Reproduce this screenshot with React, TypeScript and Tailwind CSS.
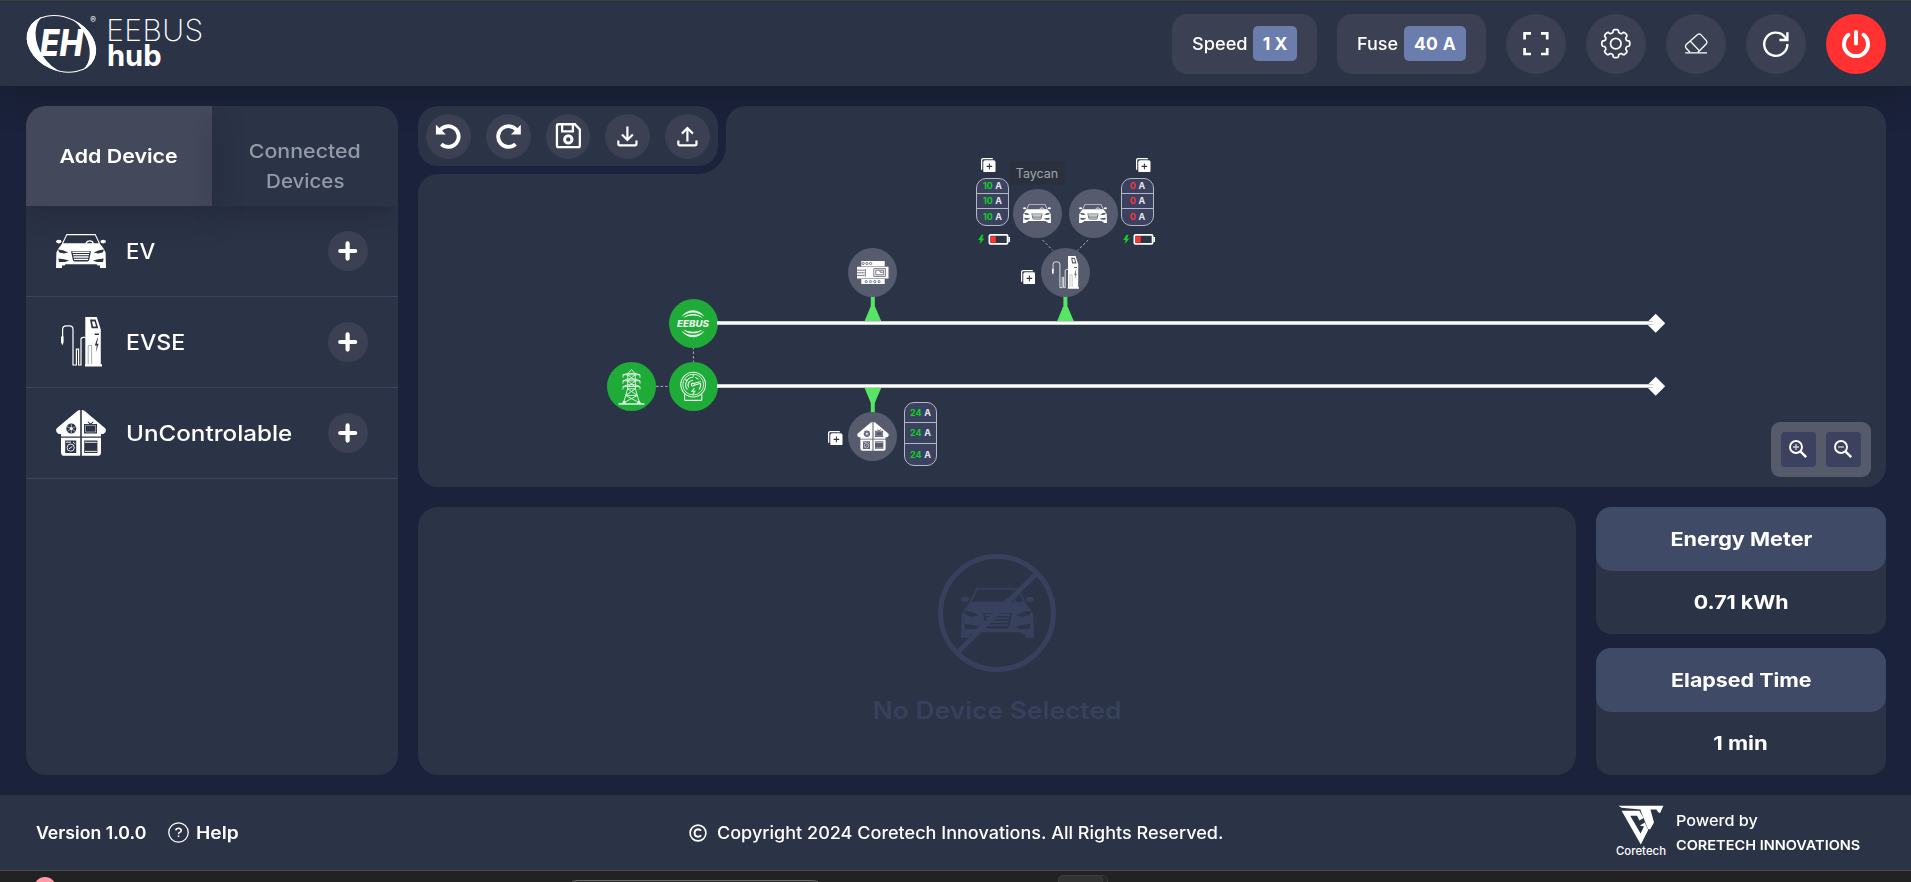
import React from "react";

type IconProps = { className?: string };

function CarIcon({ className }: IconProps) {
  return (
    <svg viewBox="0 0 50 34" className={className} fill="currentColor">
      <path d="M6.4 9.8 10.8 0.6H39.2L43.6 9.8" fill="none" stroke="currentColor" strokeWidth="1.1" />
      <ellipse cx="2.8" cy="7.6" rx="2.8" ry="1.8" />
      <ellipse cx="47.2" cy="7.6" rx="2.8" ry="1.8" />
      <path d="M30 9.8a3.8 3.8 0 0 1 7.4 0" fill="none" stroke="currentColor" strokeWidth="1.4" />
      <path
        fillRule="evenodd"
        d="M6.4 9.3H43.6L47.6 14.5 49.6 18.5 50 34H44V31.6H41.5L40.5 30.2H9.5L8.5 31.6H6V34H0L.4 18.5 2.4 14.5ZM2 15.6 3.3 18.6 8 19.6 12.2 18.6 7 16.2ZM48 15.6 46.7 18.6 42 19.6 37.8 18.6 43 16.2ZM15 17.2 17 26.4 18.6 27.6H31.4L33 26.4 35 17.2ZM2.4 24.6 3 28H9L13.2 26.6 8 25.2ZM47.6 24.6 47 28H41L36.8 26.6 42 25.2Z"
      />
      <path d="M16.4 18.4H33.6M17 20.7H33M17.5 23H32.5M18 25.4H32" stroke="currentColor" strokeWidth="1.3" />
    </svg>
  );
}

function ChargerIcon({ className }: IconProps) {
  return (
    <svg viewBox="0 0 41 50" className={className} fill="currentColor">
      <path
        fillRule="evenodd"
        d="M24.3 0H35.8L39.8 12.5V47.3H41V49.6H24V47.3H24.3ZM29 2.6 30.6 11.2H37.2L34.6 2.6ZM33.6 16.6V18H38V16.6ZM36.4 21 33.8 28.4H35.8L34.8 35.4 37.6 26.8H35.8L37 21Z"
      />
      <path d="M31 4.4h2.6l1.5 5.2h-3z" />
      <path d="M27.2 47V28.5H30.6V47" fill="none" stroke="#8f94a3" strokeWidth=".8" />
      <path
        d="M1.6 20.5V12.5Q1.6 8.9 5.4 8.9H8.4Q12 8.9 12 12.5V48H15.4V32.2H17.6V48H20V22.6Q20 20.4 22.2 20.4H24.5"
        fill="none"
        stroke="currentColor"
        strokeWidth="1.2"
      />
      <path d="M0 19.5H2.6V25L1.8 27.8H1L0 25Z" />
    </svg>
  );
}

function HouseIcon({ className }: IconProps) {
  return (
    <svg viewBox="0 0 50 46" className={className} fill="currentColor">
      <path
        fillRule="evenodd"
        d="M24.2 0V26.4H5V24L2.6 24Q-1.4 21.8 .8 18.2L21.6 .8Q22.8 0 24.2 0ZM15.3 13.6a5 5 0 1 0 0 10a5 5 0 1 0 0-10Z"
      />
      <path
        fillRule="evenodd"
        d="M25.8 0V26.4H45V24L47.4 24Q51.4 21.8 49.2 18.2L28.4 .8Q27.2 0 25.8 0ZM28 14V23.6H41V14H35.6L37.6 12 36.9 11.4 34.6 13.6 32.2 11.4 31.5 12 33.4 14Z"
      />
      <path fillRule="evenodd" d="M5 27.8H24.2V45.8H8.4Q5 45.8 5 42.4ZM9.2 30.4V43H20.2V30.4Z" />
      <path fillRule="evenodd" d="M45 27.8H25.8V45.8H41.6Q45 45.8 45 42.4ZM28.2 30.4V43H41.4V30.4Z" />
      <circle cx="15.3" cy="18.6" r="1.5" />
      <path d="M15.3 14.2v3M15.3 20v3M11 16.6l3 1.4M19.6 16.6l-3 1.4M11.6 21.2l2.6-1.8M19 21.2l-2.6-1.8" stroke="currentColor" strokeWidth=".6" />
      <path d="M29.4 15.4h10.2v6.6H29.4z" fill="none" stroke="currentColor" strokeWidth=".5" />
      <path d="M10 32.2h5M28.8 32.3h12M29 41.4h11.8" stroke="currentColor" strokeWidth=".9" />
      <circle cx="14.7" cy="37.6" r="3.6" fill="none" stroke="currentColor" strokeWidth=".9" />
      <path d="M17 32l2.4 2M13 38.8l3.4-2.4" stroke="currentColor" strokeWidth=".9" />
    </svg>
  );
}

function ControllerIcon({ className }: IconProps) {
  return (
    <svg viewBox="0 0 32 23" className={className} fill="currentColor">
      <path d="M4.3 0H27.7V5.2H4.3ZM0 5.8H31.5V17.4H0ZM4.3 18.1H27.7V23H4.3Z" />
      <g fill="none" stroke="#565c6d" strokeWidth=".8">
        <circle cx="6.2" cy="2.5" r="1.1" />
        <circle cx="9.9" cy="2.5" r="1.1" />
        <circle cx="13.6" cy="2.5" r="1.1" />
        <circle cx="9.2" cy="20.6" r="1.1" />
        <circle cx="13.5" cy="20.6" r="1.1" />
        <circle cx="17.8" cy="20.6" r="1.1" />
        <circle cx="22.1" cy="20.6" r="1.1" />
        <path d="M16.8 7.6H28.4V15.4H16.8ZM18.8 9.2H26.6V13.8H18.8ZM23 9.4V11.2H26" />
        <path d="M0 9.2H7.6M0 11.8H7.6M0 14.4H7.6M8.4 8V15.6" />
      </g>
    </svg>
  );
}

function CopyPlus({ className }: IconProps) {
  return (
    <svg viewBox="0 0 14 14" className={className}>
      <path d="M1 11.2Q.6 11 .6 10V2.4Q.6 .6 2.4 .6H10Q11 .6 11.2 1.2" fill="none" stroke="#fff" strokeWidth="1.3" />
      <rect x="2.2" y="2.2" width="11.8" height="11.8" rx="1.8" fill="#fff" />
      <path d="M8.1 5.4v5.4M5.4 8.1h5.4" stroke="#2b3347" strokeWidth="1" />
    </svg>
  );
}

function Logo() {
  return (
    <div className="flex h-[60px] w-[184px]">
      <svg viewBox="26 14 184 60" width="184" height="60" fill="#fff" className="overflow-visible">
        <mask id="ring">
          <rect x="20" y="8" width="90" height="72" fill="#fff" />
          <ellipse cx="62.2" cy="42.7" rx="33.6" ry="23.6" transform="rotate(31 62.2 42.7)" fill="#000" />
        </mask>
        <ellipse cx="61.4" cy="43.9" rx="36.1" ry="27" transform="rotate(25 61.4 43.9)" mask="url(#ring)" />
        <ellipse cx="61.4" cy="43.9" rx="35.6" ry="26.5" transform="rotate(25 61.4 43.9)" fill="none" stroke="#fff" strokeWidth="1" />
        <text x="40" y="56.4" fontSize="36.5" fontWeight="800" fontStyle="italic" fontFamily="Inter, sans-serif" textLength="43" lengthAdjust="spacingAndGlyphs">
          EH
        </text>
        <text x="90.2" y="22.6" fontSize="8.5" fontFamily="Inter, sans-serif">®</text>
        <text x="106.2" y="40.6" fontSize="30" fontWeight="200" fontFamily="Inter, sans-serif" textLength="97" lengthAdjust="spacing">
          EEBUS
        </text>
        <text x="107" y="66.2" fontSize="29.5" fontWeight="700" fontFamily="Inter, sans-serif" textLength="54.6" lengthAdjust="spacingAndGlyphs">
          hub
        </text>
      </svg>
    </div>
  );
}

function RoundButton({ children, danger }: { children: React.ReactNode; danger?: boolean }) {
  return (
    <button className={danger ? "size-[60px] rounded-full bg-[#ff3131]" : "size-[60px] rounded-full bg-[#3b4053]"}>
      <svg viewBox="0 0 60 60" className="size-full" fill="none" stroke="#fff">
        {children}
      </svg>
    </button>
  );
}

const gearPath = (() => {
  const pts: string[] = [];
  for (let i = 0; i < 8; i++) {
    const a = (i * Math.PI) / 4 - Math.PI / 2;
    const p = (r: number, d: number) => `${(29.8 + r * Math.cos(a + d)).toFixed(2)} ${(29.6 + r * Math.sin(a + d)).toFixed(2)}`;
    pts.push(`${i ? "L" : "M"}${p(11.6, -0.25)}L${p(13.4, -0.2)}Q${p(14, -0.14)} ${p(14, -0.08)}L${p(14, 0.08)}Q${p(14, 0.14)} ${p(13.4, 0.2)}L${p(11.6, 0.25)}Q${p(10.5, 0.3927)} ${p(11.6, 0.535)}`);
  }
  return pts.join("") + "Z";
})();

function Header() {
  return (
    <header className="relative flex h-[86px] items-center justify-between border-t border-[#3c3c3c] bg-[#2b3347] pr-[25px] pl-[26px] shadow-[0_10px_30px_rgba(20,28,40,0.6)]">
      <Logo />
      <div className="flex gap-5">
        <div className="flex h-[60px] w-[145px] items-center justify-between rounded-[15px] bg-[#3b4053] px-5 text-[17px] font-medium">
          <span className="origin-left scale-x-[1.07] pt-0.5">Speed</span>
          <span className="flex h-[35px] w-11 items-center justify-center rounded-[5px] bg-[#6b7dad] pt-px text-[17.5px] font-bold">1 X</span>
        </div>
        <div className="flex h-[60px] w-[149px] items-center justify-between rounded-[15px] bg-[#3b4053] px-5 text-[17px] font-medium">
          <span className="origin-left scale-x-[1.06] pt-0.5">Fuse</span>
          <span className="flex h-[35px] w-[62px] items-center justify-center rounded-[5px] bg-[#6b7dad] pt-px text-[17.5px] font-bold tracking-[0.3px]">40 A</span>
        </div>
        <RoundButton>
          <path d="M18.6 25.5V19.4H25M35 19.4H41.2V25.5M41.2 34V40H35M25 40H18.6V34" strokeWidth="2.7" />
        </RoundButton>
        <RoundButton>
          <path d={gearPath} strokeWidth="1.7" strokeLinejoin="round" />
          <circle cx="29.8" cy="29.6" r="5.3" strokeWidth="1.7" />
        </RoundButton>
        <RoundButton>
          <path d="M24 38.2 20 34Q18.8 32.4 20 30.8L31.6 20.4Q33.2 19.2 34.8 20.6L40.4 26.6Q41.6 28.2 40.4 29.8L32 38.2M24.4 27.2 33.2 36.6M19.2 38.8H41" strokeWidth="1.3" />
        </RoundButton>
        <RoundButton>
          <path d="M41.4 30A11.6 11.6 0 1 1 38.4 22.4L40.6 25.4M41.4 18.2V26H33.4" strokeWidth="2.4" />
        </RoundButton>
        <RoundButton danger>
          <path d="M22.4 20.8A12 12 0 1 0 37.6 20.8M30 18V29.4" strokeWidth="4" strokeLinecap="round" />
        </RoundButton>
      </div>
    </header>
  );
}

const devices = [
  { name: "EV", icon: <CarIcon className="h-[34px] w-[50px]" />, text: "scale-x-[1.01]" },
  { name: "EVSE", icon: <ChargerIcon className="h-[50px] w-[41px]" />, text: "scale-x-[1.05]" },
  { name: "UnControlable", icon: <HouseIcon className="h-[46px] w-[50px]" />, text: "scale-x-[1.1]" },
];

function Sidebar() {
  return (
    <aside className="h-[669px] w-[372px] overflow-hidden rounded-[20px] bg-[#2b3347]">
      <div className="flex h-[100px] text-center text-[19px] leading-[30px]">
        <div className="flex w-[186px] items-center justify-center bg-[#43485a] pt-0.5 font-semibold shadow-[0_10px_30px_rgba(20,24,36,0.3)]">
          <span className="scale-x-[1.125]">Add Device</span>
        </div>
        <div className="flex w-[186px] flex-col items-center justify-center pt-[22px] font-medium text-[#949aa6] shadow-[0_14px_24px_-8px_rgba(20,24,36,0.35)]">
          <span className="scale-x-[1.125]">Connected</span>
          <span className="scale-x-[1.08]">Devices</span>
        </div>
      </div>
      {devices.map((d) => (
        <div key={d.name} className="flex h-[91px] items-center border-b border-[#3a4560] px-[30px]">
          <div className="flex w-[50px] justify-center">{d.icon}</div>
          <div className="ml-5 flex flex-1 pt-px text-[22px] font-medium">
            <span className={"origin-left " + d.text}>{d.name}</span>
          </div>
          <button className="flex size-10 items-center justify-center rounded-full bg-[#3b4053]">
            <svg viewBox="0 0 20 20" className="size-5" stroke="#fff" strokeWidth="4.2" strokeLinecap="round">
              <path d="M9.6 2.4V17.6M2.2 10H17.2" />
            </svg>
          </button>
        </div>
      ))}
    </aside>
  );
}

function ToolButton({ children }: { children: React.ReactNode }) {
  return (
    <button className="size-[45px] rounded-full bg-[#3b4053]">
      <svg viewBox="0 0 45 45" className="size-full" fill="none" stroke="#fff">
        {children}
      </svg>
    </button>
  );
}

function Toolbar() {
  return (
    <div className="z-10 col-start-1 row-start-1 flex h-[60px] w-[300px] items-center gap-[15px] rounded-[20px] bg-[#2b3347] px-2">
      <ToolButton>
        <path d="M14 16.4A10.4 10.4 0 1 1 15.4 30.2" strokeWidth="3.8" />
        <path d="M10 10.6 20 20.4H10Z" fill="#fff" stroke="none" />
      </ToolButton>
      <ToolButton>
        <path d="M31 16.4A10.4 10.4 0 1 0 29.6 30.2" strokeWidth="3.8" />
        <path d="M35 10.6 25 20.4H35Z" fill="#fff" stroke="none" />
      </ToolButton>
      <ToolButton>
        <path d="M12.4 10.2H29L34 15.4V31.8Q34 33.2 32.6 33.2H12.4Q11 33.2 11 31.8V11.6Q11 10.2 12.4 10.2ZM16.2 10.4V17.4H27V10.4" strokeWidth="2.3" />
        <circle cx="22.4" cy="25.4" r="3.7" strokeWidth="3" />
      </ToolButton>
      <ToolButton>
        <path d="M22.5 12.5V25.8M17 20.4 22.5 26 28 20.4M13.4 26.6V30.4Q13.4 31.4 14.4 31.4H30.6Q31.6 31.4 31.6 30.4V26.6" strokeWidth="2.2" />
      </ToolButton>
      <ToolButton>
        <path d="M22.5 27.4V14.4M17 19.6 22.5 14 28 19.6M13.4 26.6V30.4Q13.4 31.4 14.4 31.4H30.6Q31.6 31.4 31.6 30.4V26.6" strokeWidth="2.2" />
      </ToolButton>
    </div>
  );
}

function Phases({ value, tone, className }: { value: string; tone: string; className: string }) {
  return (
    <div className={"absolute grid grid-rows-3 divide-y divide-[#b4b8c1] overflow-hidden rounded-[10px] border border-[#b4b8c1] bg-[#3a4260] text-[9px] leading-none font-bold " + className}>
      {[1, 2, 3].map((n) => (
        <div key={n} className="flex items-center justify-center gap-[2.5px]">
          <span className={tone}>{value}</span>
          <span className="text-[#e3e5ea]">A</span>
        </div>
      ))}
    </div>
  );
}

function Battery({ className }: IconProps) {
  return (
    <svg viewBox="0 0 32 11" className={className}>
      <path d="M3.6 .8 .2 6H2.6L1.6 10.2 6.4 4.4H4L5.6 .8Z" fill="#10d020" />
      <rect x="11.4" y=".9" width="18.2" height="9" rx="1.2" fill="none" stroke="#fff" strokeWidth="1.8" />
      <rect x="12.6" y="2.2" width="5.2" height="6.6" fill="#ff3131" />
      <rect x="30.4" y="3" width="1.6" height="5" fill="#fff" />
    </svg>
  );
}

const node = "absolute flex size-[49px] items-center justify-center rounded-full bg-[#565c6d]";
const source = "absolute flex size-[49px] items-center justify-center rounded-full bg-[#1fab37]";

function Diagram() {
  return (
    <div className="relative z-10 col-start-1 row-start-1 h-[381px] w-[1468px]">
      <svg viewBox="418 106 1468 381" className="absolute inset-0 size-full">
        <g stroke="#aeb3bd" strokeWidth="1" strokeDasharray="2.5 2" fill="none">
          <path d="M693.4 347V362M656 386.4H670M1042.5 240 1053 250.5M1088.2 240 1077.6 250.5" />
        </g>
        <g fill="#57e566">
          <path d="M870.8 296H874.8V306L881.4 321.4H864.4L870.8 306Z" />
          <path d="M1063.4 296H1067.4V306L1074 321.4H1057L1063.4 306Z" />
          <path d="M864.4 387.6H881.4L874.8 403V413H870.8V403Z" />
        </g>
        <path d="M1655.7 313.8 1665.2 323.3 1655.7 332.8 1646.2 323.3ZM1655.7 376.8 1665.2 386.3 1655.7 395.8 1646.2 386.3Z" fill="#fff" />
      </svg>

      <div className={source + " left-[250.5px] top-[193px]"}>
        <svg viewBox="0 0 49 49" className="size-full" fill="#e9f7eb">
          <path d="M12.4 18Q16 11.6 24 11.2Q32 11.6 35.6 18Q30 13.4 24 13.4Q18 13.4 12.4 18ZM14.4 19Q18 15 24 15Q30 15 33.6 19Q29 16.6 24 16.6Q19 16.6 14.4 19Z" />
          <path d="M12.4 31.4Q16 37.8 24 38.2Q32 37.8 35.6 31.4Q30 36 24 36Q18 36 12.4 31.4ZM14.4 30.4Q18 34.4 24 34.4Q30 34.4 33.6 30.4Q29 32.8 24 32.8Q19 32.8 14.4 30.4Z" />
          <text x="8" y="28" fontSize="9" fontWeight="800" fontStyle="italic" fontFamily="Inter, sans-serif" textLength="32" lengthAdjust="spacingAndGlyphs">
            EEBUS
          </text>
        </svg>
      </div>
      <div className={source + " left-[250.5px] top-[256px]"}>
        <svg viewBox="0 0 49 49" className="size-full" fill="none" stroke="#e9f7eb" strokeWidth="1.1">
          <circle cx="24.2" cy="22.6" r="12.4" />
          <circle cx="24.2" cy="22.6" r="10.4" strokeWidth=".9" />
          <path d="M18.4 27.6A7.6 7.6 0 0 1 24 15.2M30 27.6A7.6 7.6 0 0 0 31.4 21M26.4 15.4 29.6 17.4M16.2 17.6 18.6 19M24.2 12.4V15M19.6 25.6A5 5 0 0 1 24 18.2" />
          <path d="M24.6 21.6 31.6 19.4M24.6 23.6 31.6 21.2" />
          <circle cx="23.8" cy="22.6" r="1.5" />
          <path d="M25.4 26.4 23 29.2H25.8L23.6 32.6" />
          <path d="M15.6 32.2V37.4Q15.6 38.4 16.6 38.4H31.8Q32.8 38.4 32.8 37.4V32.2" />
        </svg>
      </div>
      <div className={source + " left-[188.5px] top-[256px]"}>
        <svg viewBox="0 0 49 49" className="size-full" fill="none" stroke="#e9f7eb" strokeWidth=".9">
          <path d="M20.4 12.4 24.5 7.4 28.6 12.4M16 15.6V12.8H33V15.6M16 21.6V18.8H33V21.6M16 27.4V24.6H33V27.4M16 12.8 20.6 11.4H28.4L33 12.8M16 18.8 20.6 17H28.4L33 18.8M16 24.6 20.6 22.8H28.4L33 24.6" />
          <path d="M20.8 12.4 20.6 26.6 16.4 41.6M28.2 12.4 28.4 26.6 32.6 41.6M20.8 12.8 28.4 18.8M28.2 12.8 20.6 18.8M20.6 18.8 28.4 25M28.4 18.8 20.6 25M20.4 26.8H28.6L18.6 33.4H30.6L20.4 26.8M18.6 33.4 32 40.6M30.6 33.4 17 40.6" />
          <path d="M11.6 42H37.4" strokeWidth="1.4" />
          <path d="M15.2 41.4L17 38.8 18.8 41.4ZM30.2 41.4L32 38.8 33.8 41.4Z" fill="#e9f7eb" />
        </svg>
      </div>
      <div className="absolute left-[298.5px] top-[215px] h-1 w-[936px] border-y border-[#c9ccd2] bg-white" />
      <div className="absolute left-[298.5px] top-[278px] h-1 w-[936px] border-y border-[#c9ccd2] bg-white" />

      <div className={node + " left-[430px] top-[141.5px]"}>
        <ControllerIcon className="h-[23px] w-8" />
      </div>
      <div className={node + " left-[430px] top-[306px]"}>
        <HouseIcon className="h-[29px] w-8" />
      </div>
      <div className={node + " left-[623px] top-[141.5px]"}>
        <ChargerIcon className="h-[33px] w-[27px]" />
      </div>
      <div className={node + " left-[595px] top-[83px]"}>
        <CarIcon className="mr-px h-[19px] w-7" />
      </div>
      <div className={node + " left-[651px] top-[83px]"}>
        <CarIcon className="mr-px h-[19px] w-7" />
      </div>

      <div className="absolute left-[591px] top-[55px] flex h-6 w-14 items-center justify-center rounded-[3px] bg-[#2a313c] pt-0.5 text-[12.5px] text-[#a0a6b0]">Taycan</div>

      <Phases value="10" tone="text-[#10d020]" className="left-[558px] top-[71.5px] h-12 w-[33px]" />
      <Phases value="0" tone="text-[#ff3040]" className="left-[703px] top-[71.5px] h-12 w-[33px]" />
      <Phases value="24" tone="text-[#10d020]" className="left-[486px] top-[295.5px] h-16 w-[33px]" />

      <CopyPlus className="absolute left-[563px] top-[51.5px] size-[14.5px]" />
      <CopyPlus className="absolute left-[718px] top-[51.5px] size-[14.5px]" />
      <CopyPlus className="absolute left-[602.5px] top-[163.5px] size-[14.5px]" />
      <CopyPlus className="absolute left-[410px] top-[324.5px] size-[14.5px]" />

      <Battery className="absolute left-[559.5px] top-[128px] h-[11px] w-8" />
      <Battery className="absolute left-[704.5px] top-[128px] h-[11px] w-8" />

      <div className="absolute right-[15px] bottom-[10px] flex gap-[10px] rounded-[9px] bg-[#555b6b] p-[10px]">
        {["M12 15H18M15 12V18", "M12 15H18"].map((d) => (
          <button key={d} className="size-[35px] rounded-[4px] bg-[#3a4260]">
            <svg viewBox="0 0 35 35" className="size-full" fill="none" stroke="#fff">
              <circle cx="15" cy="15" r="6" strokeWidth="1.9" />
              <path d={d} strokeWidth="1.3" stroke="#d0d3da" />
              <path d="M19.4 19.4 25.2 25.2" strokeWidth="2.4" />
            </svg>
          </button>
        ))}
      </div>
    </div>
  );
}

function Workspace() {
  return (
    <section className="grid h-[381px] w-[1468px]">
      <div className="col-start-1 row-start-1 bg-[#2b3347] [clip-path:path('M308_20A20_20_0_0_1_328_0H1448A20_20_0_0_1_1468_20V361A20_20_0_0_1_1448_381H20A20_20_0_0_1_0_361V88A20_20_0_0_1_20_68H280A28_28_0_0_0_308_40Z')]" />
      <Diagram />
      <Toolbar />
    </section>
  );
}

function EmptyDetail() {
  return (
    <section className="flex h-[268px] w-[1158px] flex-col items-center rounded-[20px] bg-[#2b3347] pt-[47px] text-[#37415d]">
      <div className="grid size-[118px] place-items-center">
        <CarIcon className="col-start-1 row-start-1 h-[50px] w-[73px]" />
        <svg viewBox="0 0 118 118" className="col-start-1 row-start-1 size-full" fill="none" stroke="currentColor" strokeWidth="5">
          <circle cx="59" cy="59" r="56.4" />
          <path d="M98.9 19.1 19.1 98.9" />
        </svg>
      </div>
      <p className="mt-[21px] scale-x-[1.1] text-[24px] leading-9 font-semibold">No Device Selected</p>
    </section>
  );
}

function Stat({ title, value, titleClass, valueClass }: { title: string; value: string; titleClass: string; valueClass: string }) {
  return (
    <div className="flex h-[127px] w-[290px] flex-col rounded-[15px] bg-[#2b3347] text-[19px] font-bold">
      <div className="flex h-[64px] items-center justify-center rounded-[15px] bg-[#3f4a66] pt-0.5">
        <span className={titleClass}>{title}</span>
      </div>
      <div className="flex flex-1 items-center justify-center pt-px">
        <span className={valueClass}>{value}</span>
      </div>
    </div>
  );
}

function Footer() {
  return (
    <footer className="relative flex h-[75px] items-center justify-between bg-[#2b3347] pr-[50px] pl-9 text-[17px]">
      <div className="flex items-center font-semibold">
        <div className="flex w-[132px] pt-0.5">
          <span className="origin-left scale-x-[1.04]">Version 1.0.0</span>
        </div>
        <svg viewBox="0 0 21 21" className="size-[21px]" fill="none" stroke="#fff">
          <circle cx="10.5" cy="10.5" r="9.7" strokeWidth="1.3" />
          <path d="M7.8 8.4Q8 6.2 10.5 6.2T13.2 8.4Q13.2 9.8 11.6 10.4Q10.5 10.9 10.5 12.2M10.5 13.6V15" strokeWidth="1.5" />
        </svg>
        <span className="ml-[7px] origin-left scale-x-[1.13] pt-0.5">Help</span>
      </div>
      <div className="absolute inset-y-0 left-[689px] flex items-center font-medium">
        <svg viewBox="0 0 18 18" className="size-[18px]" fill="none" stroke="#fff">
          <circle cx="9" cy="9" r="7.9" strokeWidth="1.6" />
          <path d="M12 6.8Q11 5.2 9.1 5.2Q5.6 5.4 5.6 9T9.1 12.8Q11 12.8 12 11.2" strokeWidth="1.9" />
        </svg>
        <span className="ml-[9.5px] origin-left scale-x-[1.061] pt-0.5 whitespace-nowrap">Copyright 2024 Coretech Innovations. All Rights Reserved.</span>
      </div>
      <div className="flex items-center gap-[10px]">
        <svg viewBox="0 0 50 56" className="h-14 w-[50px]" fill="#fff">
          <path d="M2.6 .8H47.4L44 8.2 42 7 40.4 4.6H34.4L38 17.4 34 24.4 32 24 25.4 7.4 24.4 4.6 5.4 2.8Z" />
          <path d="M5.6 5.8H23.4L27.6 13 23.4 15.4 21 10.8H14.2L24.6 28.6 28 21.6 23.8 20.4 28.8 17.6 32.2 25 24.8 39.4Z" />
          <text x="0" y="50" fontSize="11.5" fontWeight="500" fontFamily="Inter, sans-serif" textLength="50" lengthAdjust="spacingAndGlyphs">
            Coretech
          </text>
        </svg>
        <div className="flex w-[185px] flex-col items-start whitespace-nowrap">
          <span className="origin-left scale-x-[1.08] text-[15px] leading-6 font-medium">Powerd by</span>
          <span className="origin-left scale-x-[1.075] text-[13.5px] leading-6 font-semibold">CORETECH INNOVATIONS</span>
        </div>
      </div>
    </footer>
  );
}

export default function App() {
  return (
    <div className="flex h-[882px] w-[1911px] flex-col overflow-hidden bg-[#1b223c] font-['Inter',sans-serif] text-white antialiased">
      <Header />
      <main className="relative flex h-[709px] gap-5 pt-5 pl-[26px]">
        <Sidebar />
        <div className="flex flex-col gap-5">
          <Workspace />
          <div className="flex gap-5">
            <EmptyDetail />
            <div className="flex flex-col justify-between">
              <Stat title="Energy Meter" value="0.71 kWh" titleClass="scale-x-[1.137]" valueClass="scale-x-[1.124]" />
              <Stat title="Elapsed Time" value="1 min" titleClass="scale-x-[1.127]" valueClass="scale-x-[1.16]" />
            </div>
          </div>
        </div>
      </main>
      <Footer />
      <div className="relative flex h-3 items-start overflow-hidden border-t border-[#4a4a48] bg-[#222222]">
        <div className="absolute left-[34px] top-[6px] size-[22px] rounded-full bg-[#ff9aa6]" />
        <div className="absolute left-[567px] top-[9px] h-6 w-[256px] rounded-[10px] border border-[#6a6a6a] bg-[#2b2b2b]" />
        <div className="absolute left-[1062px] top-[4px] h-6 w-[46px] rounded-[5px] border border-[#3c3c3c] bg-[#262626]" />
        <div className="absolute left-[1058px] top-[4px] h-6 w-[45px] rounded-[5px] border border-[#3c3c3c] bg-[#333333]" />
      </div>
    </div>
  );
}
